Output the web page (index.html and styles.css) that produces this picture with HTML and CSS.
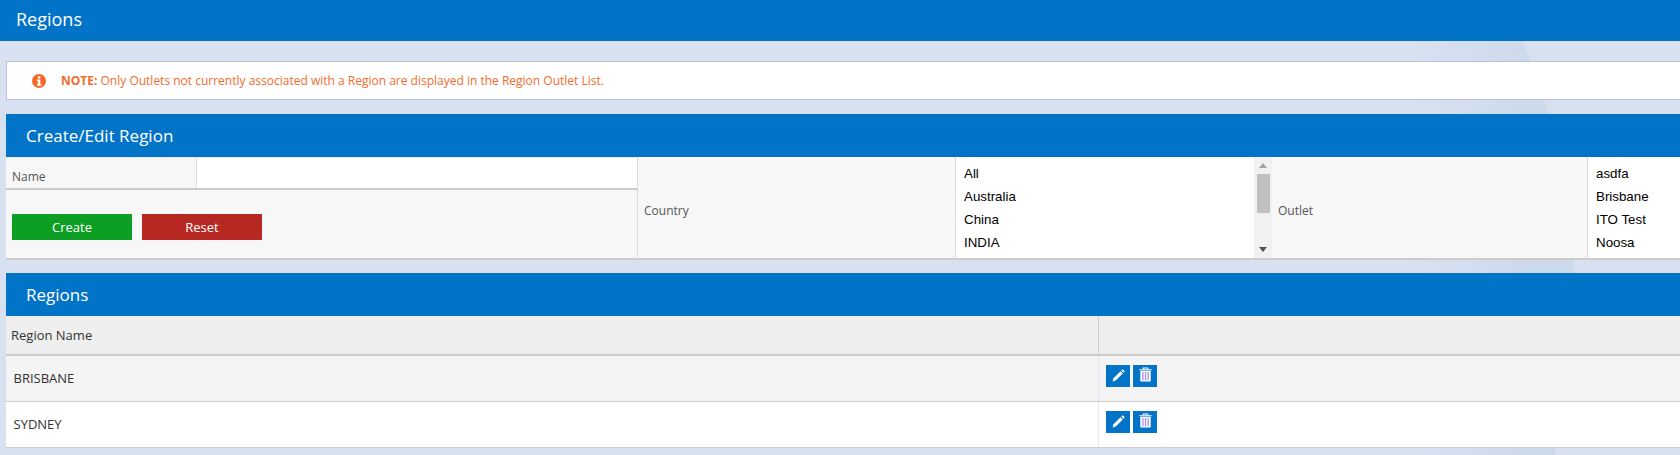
FILE: index.html
```html
<!DOCTYPE html>
<html lang="en">
<head>
<meta charset="utf-8">
<title>Regions</title>
<link rel="stylesheet" href="styles.css">
</head>
<body>
<header class="page-title">Regions</header>
<main class="content">
  <div class="note">
    <svg class="note-icon" viewBox="0 0 14 14" width="14" height="14"><circle cx="7" cy="7" r="7" fill="#f4692a"/><rect x="5.9" y="2.3" width="2.4" height="2.2" fill="#fff"/><path d="M4.9 5.6h3.4v4.6h1v1.5H4.9v-1.5h1V7.1h-1z" fill="#fff"/></svg>
    <span><b>NOTE:</b> Only Outlets not currently associated with a Region are displayed in the Region Outlet List.</span>
  </div>
  <section class="panel-form">
    <h2 class="panel-head">Create/Edit Region</h2>
    <div class="form-grid">
      <div class="form-left">
        <div class="name-row">
          <label class="name-label">Name</label>
          <div class="name-input"></div>
        </div>
        <div class="actions">
          <button class="btn btn-create">Create</button>
          <button class="btn btn-reset">Reset</button>
        </div>
      </div>
      <div class="field-label">Country</div>
      <div class="listbox">
        <ul class="options">
          <li>All</li><li>Australia</li><li>China</li><li>INDIA</li>
        </ul>
        <div class="scrollbar">
          <svg viewBox="0 0 8 5" width="8" height="5" class="arrow-up"><path d="M4 0l4 5H0z" fill="#a3a3a3"/></svg>
          <div class="thumb"></div>
          <svg viewBox="0 0 8 5" width="8" height="5" class="arrow-down"><path d="M0 0h8L4 5z" fill="#505050"/></svg>
        </div>
      </div>
      <div class="field-label">Outlet</div>
      <div class="listbox">
        <ul class="options">
          <li>asdfa</li><li>Brisbane</li><li>ITO Test</li><li>Noosa</li>
        </ul>
      </div>
    </div>
  </section>
  <section class="panel-table">
    <h2 class="panel-head">Regions</h2>
    <div class="table">
      <div class="row row-head"><div class="col-name head-name">Region Name</div><div class="col-actions"></div></div>
      <div class="row row-odd">
        <div class="col-name">BRISBANE</div>
        <div class="col-actions">
          <button class="icon-btn" aria-label="Edit"><svg class="icon-edit" viewBox="0 0 14 14" width="13" height="13"><path d="M.6 13.4l1-3.4 7.6-7.6 2.4 2.4L4 12.4z" fill="#fff"/><path d="M10 1.6l.8-.8a1 1 0 0 1 1.3 0l1.1 1.1a1 1 0 0 1 0 1.3l-.8.8z" fill="#fff"/></svg></button>
          <button class="icon-btn" aria-label="Delete"><svg class="icon-trash" viewBox="0 0 14 16" width="13" height="15"><path d="M4.6 2.2V1h4.8v1.2M.4 2.9h13.2" fill="none" stroke="#fff" stroke-width="1.2"/><path d="M1.4 4h11.2v10.6a1 1 0 0 1-1 1H2.4a1 1 0 0 1-1-1z" fill="#fff"/><path d="M4.2 5.4v8.8M7 5.4v8.8M9.8 5.4v8.8" stroke="#a98df5" stroke-width="1.4"/></svg></button>
        </div>
      </div>
      <div class="row row-even">
        <div class="col-name">SYDNEY</div>
        <div class="col-actions">
          <button class="icon-btn" aria-label="Edit"><svg class="icon-edit" viewBox="0 0 14 14" width="13" height="13"><path d="M.6 13.4l1-3.4 7.6-7.6 2.4 2.4L4 12.4z" fill="#fff"/><path d="M10 1.6l.8-.8a1 1 0 0 1 1.3 0l1.1 1.1a1 1 0 0 1 0 1.3l-.8.8z" fill="#fff"/></svg></button>
          <button class="icon-btn" aria-label="Delete"><svg class="icon-trash" viewBox="0 0 14 16" width="13" height="15"><path d="M4.6 2.2V1h4.8v1.2M.4 2.9h13.2" fill="none" stroke="#fff" stroke-width="1.2"/><path d="M1.4 4h11.2v10.6a1 1 0 0 1-1 1H2.4a1 1 0 0 1-1-1z" fill="#fff"/><path d="M4.2 5.4v8.8M7 5.4v8.8M9.8 5.4v8.8" stroke="#a98df5" stroke-width="1.4"/></svg></button>
        </div>
      </div>
    </div>
  </section>
</main>
</body>
</html>
```
FILE: styles.css
```css
* { box-sizing: border-box; }
html, body { margin: 0; padding: 0; height: 455px; overflow: hidden; }
body {
  width: 1680px;
  font-family: "Open Sans", sans-serif;
  color: #333;
  background-color: #d8e1f0;
  background-image:
    linear-gradient(to right, #d8e1f0 1410px, rgba(216, 225, 240, 0) 1530px),
    radial-gradient(circle 637px at 938px 295px, #cddaeb 100%, transparent 100%);
  background-repeat: no-repeat;
}
.page-title {
  height: 41px;
  background: #0274c8;
  color: #fff;
  font-size: 18px;
  line-height: 39px;
  padding-left: 16px;
}
.content { padding: 20px 0 0 6px; }
.note {
  display: flex;
  align-items: center;
  height: 39px;
  background: #fff;
  border: 1px solid #b8c3db;
  border-right: 0;
  padding-left: 25px;
  font-size: 12px;
  color: #f26c2b;
}
.note-icon { margin-right: 15px; flex: none; }
.note b { font-weight: 700; }
.panel-form { margin-top: 14px; }
.panel-head {
  margin: 0;
  height: 43px;
  background: #0274c8;
  color: #fff;
  font-size: 17px;
  font-weight: 400;
  line-height: 43px;
  padding-left: 20px;
}
.form-grid {
  display: grid;
  grid-template-columns: 632px 317px 317px 315px 318px;
  width: 1899px;
  height: 102px;
  background: #f7f7f7;
}
.form-left {
  display: flex;
  flex-direction: column;
  border-right: 1px solid #ddd;
  border-bottom: 2px solid #ccc;
  height: 103px;
}
.name-row {
  display: flex;
  height: 33px;
  border-top: 1px solid #e8e8e8;
  border-bottom: 2px solid #ccc;
}
.name-label {
  width: 191px;
  font-size: 12px;
  line-height: 37px;
  padding-left: 6px;
  color: #555;
  border-right: 1px solid #ddd;
}
.name-input { flex: 1; background: #fff; }
.actions {
  flex: 1;
  display: flex;
  align-items: center;
  gap: 10px;
  padding: 6px 0 0 6px;
}
.btn {
  width: 120px;
  height: 26px;
  border: 0;
  padding: 0;
  color: #fff;
  font-family: inherit;
  font-size: 13px;
}
.btn-create { background: #0d9f24; }
.btn-reset { background: #b72822; }
.field-label {
  display: flex;
  align-items: center;
  font-size: 12px;
  color: #555;
  padding: 6px 0 0 6px;
  border-bottom: 2px solid #ccc;
}
.listbox {
  display: flex;
  background: #fff;
  border-left: 1px solid #ddd;
  border-bottom: 2px solid #ccc;
  overflow: hidden;
}
.options {
  flex: 1;
  list-style: none;
  margin: 0;
  padding: 5px 0 0 8px;
  font-family: "Liberation Sans", Arial, sans-serif;
  font-size: 13.33px;
  color: #000;
}
.options li { height: 23px; line-height: 23px; }
.scrollbar {
  position: relative;
  width: 18px;
  display: flex;
  flex-direction: column;
  align-items: center;
  background: #f1f1f1;
}
.arrow-up { margin-top: 6px; }
.thumb { width: 13px; height: 39px; margin-top: 6px; background: #c1c1c1; }
.arrow-down { margin-top: auto; margin-bottom: 6px; }
.panel-table { margin-top: 14px; }
.table { width: 1674px; }
.row { display: flex; }
.row-head { height: 40px; background: #eee; border-bottom: 2px solid #ccc; }
.row-odd { height: 46px; background: #f4f4f4; border-bottom: 1px solid #ccc; }
.row-even { height: 46px; background: #fff; border-bottom: 1px solid #ccc; }
.col-name {
  width: 1093px;
  padding-left: 7.5px;
  font-size: 13px;
  line-height: 44px;
  color: #333;
  border-right: 1px solid #e6e6f5;
}
.head-name { padding-left: 5px; line-height: 38px; border-right: 1px solid #ccc; }
.col-actions { flex: 1; display: flex; gap: 3px; padding: 9px 0 0 7px; }
.icon-btn {
  width: 24px;
  height: 22px;
  border: 0;
  padding: 0;
  background: #0274c8;
  display: flex;
  align-items: center;
  justify-content: center;
}
.icon-edit { margin-bottom: 1px; }
.icon-trash { margin-bottom: 3px; }
```
